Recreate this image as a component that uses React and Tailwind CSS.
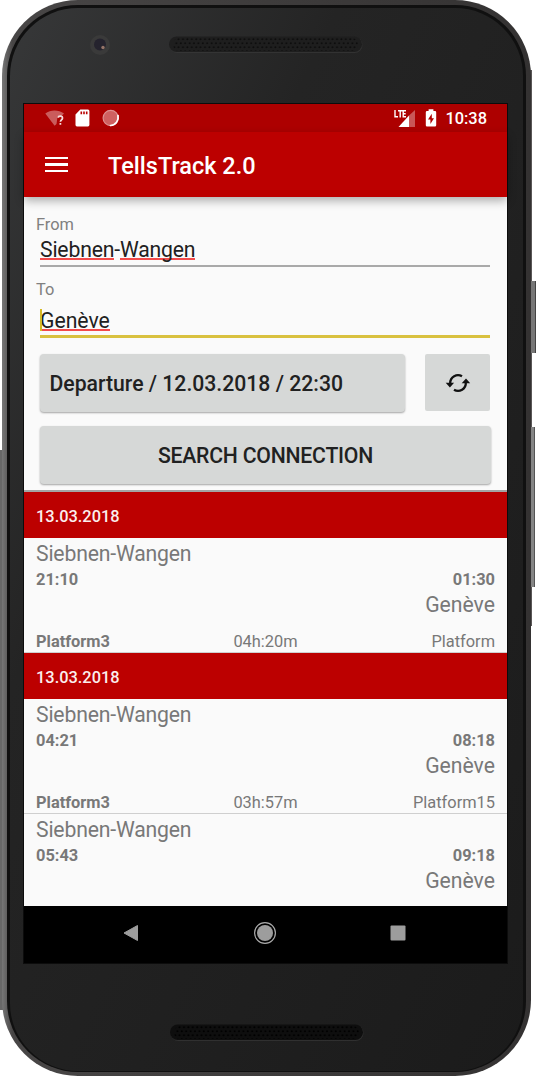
import React from "react";

const trips = [
  { date: "13.03.2018", dep: "21:10", arr: "01:30", dur: "04h:20m", to: "Platform" },
  { date: "13.03.2018", dep: "04:21", arr: "08:18", dur: "03h:57m", to: "Platform15" },
  { dep: "05:43", arr: "09:18" },
];

function Speaker({ id, base, dot }) {
  return (
    <svg width="194" height="18" viewBox="0 0 194 18" className="block">
      <defs>
        <pattern id={id} width="4.4" height="8" patternUnits="userSpaceOnUse" x="4" y="1">
          <circle cx="1.2" cy="2.2" r="1" fill={dot} />
          <circle cx="3.4" cy="6.2" r="1" fill={dot} />
        </pattern>
      </defs>
      <rect x="0.5" y="1" width="193" height="16" rx="8" fill="#3c3c3c" opacity="0.6" />
      <rect x="0" y="0.5" width="193" height="15.5" rx="7.7" fill={base} />
      <rect x="4" y="2" width="185" height="13" rx="6" fill={`url(#${id})`} />
    </svg>
  );
}

function StatusBar() {
  return (
    <div className="flex h-7 shrink-0 items-center bg-[#ad0000] pl-[21px] pr-5 text-white">
      <svg width="20" height="18" viewBox="0 0 20 18">
        <path d="M0.3 4.6C5.5 0.4 13.5 0.4 19 4.6L15.5 8H12.5L11.5 15L9.6 16.8Z" fill="#fff" opacity="0.36" />
        <path d="M13.1 8.8C13.3 6.5 17.6 6.6 17.5 9.1C17.4 10.8 15.4 10.9 15.4 12.8M15.4 14.1V15.8" fill="none" stroke="#f6dede" strokeWidth="1.7" />
      </svg>
      <svg width="15" height="18" viewBox="0 0 15 18" className="ml-[10px]">
        <path d="M5.3 0.6H13A1.5 1.5 0 0 1 14.4 2V16A1.5 1.5 0 0 1 13 17.4H2A1.5 1.5 0 0 1 0.5 16V5.4Z" fill="#fff" />
        <path d="M6.3 2.5V5.3M9 2.5V5.3M11.7 2.5V5.3" stroke="#b80000" strokeWidth="1.6" />
      </svg>
      <svg width="18" height="18" viewBox="0 0 18 18" className="ml-3">
        <circle cx="8.7" cy="9" r="7.6" fill="#cf6060" stroke="#dd9090" strokeWidth="1.2" />
        <path d="M16 6.5C17 11.5 13.7 16.3 8.5 16.5" fill="none" stroke="#fff" strokeWidth="1.7" strokeLinecap="round" />
      </svg>
      <div className="flex-1" />
      <svg width="22" height="19" viewBox="0 0 22 19">
        <path d="M15 6.5L21 1V18H15Z" fill="#fff" opacity="0.34" />
        <path d="M15 6.5V18H4.5Z" fill="#fff" />
        <path d="M1 1V7.8H4M4 1.7H8.5M6.2 1.7V8.5M12 1.7H9.2V7.8H12M9.2 4.7H11.7" fill="none" stroke="#fff" strokeWidth="1.4" />
      </svg>
      <svg width="12" height="18" viewBox="0 0 12 18" className="ml-[9px]">
        <path d="M3.6 0.3H8.4V2H10A1.2 1.2 0 0 1 11.2 3.2V16.3A1.2 1.2 0 0 1 10 17.5H2A1.2 1.2 0 0 1 0.8 16.3V3.2A1.2 1.2 0 0 1 2 2H3.6Z" fill="#fff" />
        <path d="M6.8 4.8L3 10.5H5.4V15L9 9.2H6.8Z" fill="#b00000" />
      </svg>
      <span className="ml-[8px] whitespace-nowrap pt-px text-[16.4px] font-medium leading-7">10:38</span>
    </div>
  );
}

function Trip({ trip }) {
  return (
    <>
      {trip.date && (
        <div className="flex h-[46px] shrink-0 items-center bg-[#bc0000] pl-3 pt-[4px] text-[16.4px] font-medium text-[#fbeeee]">
          {trip.date}
        </div>
      )}
      <div className="shrink-0 px-3 text-[16.4px] text-[#787878]">
        <div className="h-[31px] text-[21.2px] leading-[31px] tracking-[-0.18px]">Siebnen-Wangen</div>
        <div className="flex h-[21px] justify-between pt-px font-bold leading-5">
          <span>{trip.dep}</span>
          <span>{trip.arr}</span>
        </div>
        <div className="h-[30px] text-right text-[21.2px] leading-[30px]">Genève</div>
        {trip.dur && (
          <div className="mt-[11px] grid h-[21px] grid-cols-3 leading-[22px]">
            <span className="font-bold">Platform3</span>
            <span className="text-center">{trip.dur}</span>
            <span className="text-right">{trip.to}</span>
          </div>
        )}
      </div>
      {trip.dur && <div className="h-px shrink-0 bg-[#cfcfcf]" />}
    </>
  );
}

export default function App() {
  return (
    <div className="relative h-[1077px] w-[537px] overflow-hidden bg-white font-['Roboto',sans-serif]">
      <div className="absolute left-0 top-[450px] h-[560px] w-1 bg-[#686868]" />
      <div className="absolute left-[528px] top-[70px] h-[556px] w-1 bg-[#5a5757]" />
      <div className="absolute left-[530px] top-[281px] h-[72px] w-1.5 border-r border-[#444] bg-[#777]" />
      <div className="absolute left-[530px] top-[427px] h-40 w-[5px] border-r border-[#555] bg-[#858585]" />
      <div className="relative ml-0.5 h-[1076px] w-[529px] rounded-[76px] bg-linear-to-r from-[#777] via-[#484646] via-[2%] to-[#343232] p-[5px] pb-1">
        <div className="h-full rounded-[71px] bg-[#101010] p-[3px] pb-px">
          <div className="flex h-full flex-col items-center rounded-[68px] bg-linear-to-br from-[#373839] via-[#242424] via-[32%] to-[#1b1b1b] pr-0.5">
            <div className="relative flex h-24 w-full shrink-0 justify-center pt-[28px]">
              <svg width="22" height="22" viewBox="0 0 22 22" className="absolute left-[79px] top-[26px]">
                <circle cx="11" cy="11" r="10" fill="#3a3a3a" />
                <circle cx="11" cy="10.5" r="6" fill="#25232e" />
                <circle cx="14" cy="13.5" r="1.7" fill="#967568" />
              </svg>
              <Speaker id="speaker-top" base="#1e1e1e" dot="#0d0d0d" />
            </div>
            <div className="flex h-[859px] w-[483px] shrink-0 flex-col bg-[#fafafa] shadow-[0_0_0_1px_#0c0c0c]">
              <StatusBar />
              <div className="relative z-10 flex h-[65px] shrink-0 items-center bg-[#bc0000] pl-[21px] text-white shadow-[0_4px_9px_rgba(0,0,0,0.3)]">
                <div className="flex w-[23px] flex-col gap-[4.4px]">
                  <i className="h-[2.2px] bg-white" />
                  <i className="h-[2.2px] bg-white" />
                  <i className="h-[2.2px] bg-white" />
                </div>
                <h1 className="ml-[40px] pt-[4px] text-[23.5px] font-medium">TellsTrack 2.0</h1>
              </div>
              <div className="shrink-0 px-4 text-[#212121]">
                <div className="-ml-1 mt-[18px] h-5 text-[16.4px] leading-5 text-[#808080]">From</div>
                <div className="flex h-[32px] w-[450px] items-start border-b-2 border-[#a9a9a9] text-[21.2px] leading-[30px] tracking-[-0.18px]">
                  <span className="h-[24.5px] border-b-2 border-[#f34b4b]">Siebnen</span>
                  <span>-</span>
                  <span className="h-[24.5px] border-b-2 border-[#f34b4b]">Wangen</span>
                </div>
                <div className="-ml-1 mt-[13px] h-5 text-[16.4px] leading-5 text-[#808080]">To</div>
                <div className="flex h-[38px] w-[450px] items-start border-b-[3px] border-[#d9c13f] pt-[5px] text-[21.2px] leading-[32px]">
                  <span className="relative h-[26px] border-b-2 border-[#f34b4b]">
                    Genève
                    <i className="absolute left-0 top-1 h-[22px] w-[1.5px] bg-[#d5b925]" />
                  </span>
                </div>
                <div className="mt-4 flex gap-5">
                  <button className="h-[58px] w-[365px] rounded-sm bg-[#d6d8d7] pl-[9.5px] pt-px text-left text-[21.2px] font-medium shadow-[0_1px_2px_rgba(0,0,0,0.35)]">
                    Departure / 12.03.2018 / 22:30
                  </button>
                  <button className="flex h-[57px] w-[65px] items-center justify-center rounded-xs bg-[#d6d8d7]" aria-label="Swap">
                    <svg width="26" height="22" viewBox="0 0 26 22">
                      <path d="M5.2 11A7.8 7.8 0 0 1 17 4.3M20.8 10.5A7.8 7.8 0 0 1 9 17.7" fill="none" stroke="#111" strokeWidth="2.3" />
                      <path d="M0.7 10.8H9.1L4.9 15.4ZM16.7 11.2H25.2L21 6.5Z" fill="#111" />
                    </svg>
                  </button>
                </div>
                <button className="mt-[14px] block h-[58px] w-[451px] rounded-sm bg-[#d6d8d7] pt-px text-[21.2px] font-medium tracking-[-0.22px] shadow-[0_1px_2px_rgba(0,0,0,0.35)]">
                  SEARCH CONNECTION
                </button>
              </div>
              <div className="mt-[6px] h-0.5 shrink-0 bg-[#a4a4a4]" />
              <div className="flex min-h-0 flex-1 flex-col overflow-hidden">
                {trips.map((t, i) => (
                  <Trip key={i} trip={t} />
                ))}
              </div>
              <div className="flex h-[57px] shrink-0 items-center justify-between bg-black pb-[3px] pl-[98px] pr-[100px]">
                <svg width="18" height="18" viewBox="0 0 18 18">
                  <path d="M2 9L15.5 1.5V16.5Z" fill="#9d9d9d" stroke="#9d9d9d" strokeLinejoin="round" />
                </svg>
                <svg width="24" height="24" viewBox="0 0 24 24">
                  <circle cx="12" cy="12" r="10.4" fill="none" stroke="#aaa" strokeWidth="1.2" />
                  <circle cx="12" cy="12" r="8" fill="#9d9d9d" />
                </svg>
                <svg width="18" height="18" viewBox="0 0 18 18">
                  <rect x="1.5" y="1.5" width="15" height="15" rx="1" fill="#9d9d9d" />
                </svg>
              </div>
            </div>
            <div className="pl-0.5 pt-[61px]">
              <Speaker id="speaker-bottom" base="#0e0e0e" dot="#000" />
            </div>
          </div>
        </div>
      </div>
    </div>
  );
}
